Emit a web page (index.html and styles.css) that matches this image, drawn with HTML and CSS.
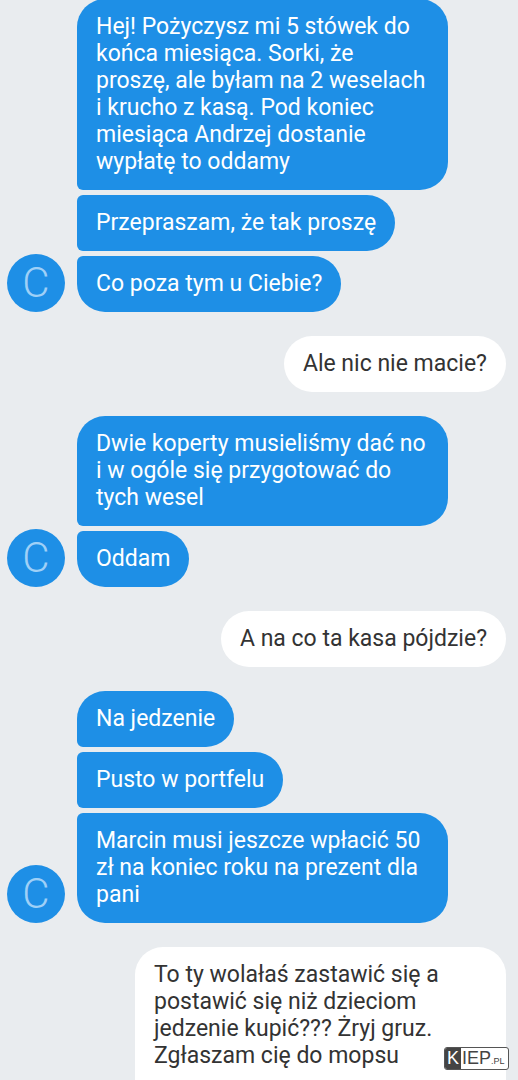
FILE: index.html
```html
<!DOCTYPE html>
<html lang="pl">
<head>
    <meta charset="UTF-8">
    <meta name="viewport" content="width=device-width, initial-scale=1.0">
    <title>Rozmowa</title>
    <link rel="stylesheet" href="styles.css">
</head>
<body>
    <div class="chat">
        <div class="group">
            <div class="avatar">C</div>
            <div class="bubbles">
                <div class="msg">Hej! Pożyczysz mi 5 stówek do końca miesiąca. Sorki, że proszę, ale byłam na 2 weselach i krucho z kasą. Pod koniec miesiąca Andrzej dostanie wypłatę to oddamy</div>
                <div class="msg">Przepraszam, że tak proszę</div>
                <div class="msg">Co poza tym u Ciebie?</div>
            </div>
        </div>

        <div class="mine">Ale nic nie macie?</div>

        <div class="group">
            <div class="avatar">C</div>
            <div class="bubbles">
                <div class="msg">Dwie koperty musieliśmy dać no i w ogóle się przygotować do tych wesel</div>
                <div class="msg">Oddam</div>
            </div>
        </div>

        <div class="mine">A na co ta kasa pójdzie?</div>

        <div class="group">
            <div class="avatar">C</div>
            <div class="bubbles">
                <div class="msg">Na jedzenie</div>
                <div class="msg">Pusto w portfelu</div>
                <div class="msg">Marcin musi jeszcze wpłacić 50 zł na koniec roku na prezent dla pani</div>
            </div>
        </div>

        <div class="mine">To ty wolałaś zastawić się a postawić się niż dzieciom jedzenie kupić??? Żryj gruz. Zgłaszam cię do mopsu</div>
    </div>

    <div class="watermark"><span class="wm-k">K</span><span class="wm-rest">IEP<small>.PL</small></span></div>
</body>
</html>
```

FILE: styles.css
```css
html, body {
    margin: 0;
    padding: 0;
}

body {
    background: #e9ecef;
    font-family: Roboto, "Noto Sans", sans-serif;
    font-size: 23px;
    line-height: 27px;
    height: 1080px;
    overflow: hidden;
}

.chat {
    display: flex;
    flex-direction: column;
    gap: 24px;
    margin-top: -1px;
    padding: 0 12px 0 7px;
}

.group {
    display: flex;
    align-items: flex-end;
    gap: 12px;
}

.avatar {
    flex: none;
    width: 58px;
    height: 58px;
    border-radius: 50%;
    background: #1e8fe6;
    color: #9fd0f7;
    font-size: 42px;
    font-weight: 300;
    line-height: 58px;
    text-align: center;
}

.bubbles {
    display: flex;
    flex-direction: column;
    align-items: flex-start;
    gap: 5px;
}

.msg {
    max-width: 333px;
    padding: 14px 19px 15px;
    background: #1e8fe6;
    color: #fff;
    border-radius: 6px 28px 28px 6px;
}

.msg:first-child {
    border-top-left-radius: 28px;
}

.msg:last-child {
    border-bottom-left-radius: 28px;
}

.mine {
    align-self: flex-end;
    max-width: 333px;
    padding: 14px 19px 15px;
    background: #fff;
    color: #333;
    border-radius: 28px;
}

.mine:last-child {
    padding-bottom: 40px;
}

.watermark {
    position: absolute;
    left: 444px;
    top: 1047px;
    display: flex;
    height: 21px;
    font-family: "Liberation Sans", sans-serif;
    font-size: 18px;
    line-height: 21px;
    border: 1px solid #555;
    border-radius: 3px;
    overflow: hidden;
    background: #fff;
}

.wm-k {
    background: #444;
    color: #fff;
    padding: 0 2px;
}

.wm-rest {
    color: #444;
    padding: 0 3px 0 1px;
}

.wm-rest small {
    font-size: 9px;
}
```
